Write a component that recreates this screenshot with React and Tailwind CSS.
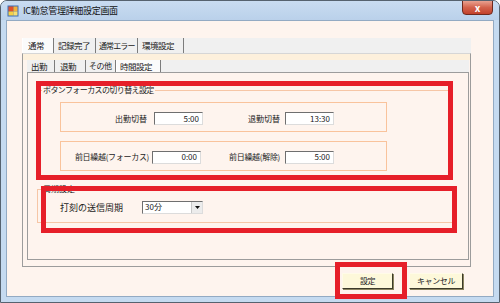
const font = "font-['Noto_Sans_CJK_JP','Noto_Sans',sans-serif]";

function Tab({ label, width, pl, selected, size = 'text-[8.5px] tracking-[-0.5px]' }) {
  return (
    <div
      className={`h-full flex items-center whitespace-nowrap overflow-hidden border-r border-[#7c7c7c] leading-none text-[#1a1a1a] ${size} ${width} ${pl} ${
        selected ? 'bg-[#fbfbfb] border-l border-l-white' : ''
      }`}
    >
      {label}
    </div>
  );
}

function Field({ value, w = 'w-[49px]' }) {
  return (
    <div
      className={`${w} h-[13px] bg-white border border-t-[#6f6f6f] border-l-[#6f6f6f] border-r-[#dcdcdc] border-b-[#dcdcdc] flex items-center justify-end pr-[3px] text-[8px] leading-none text-[#222]`}
    >
      {value}
    </div>
  );
}

function Button({ label, w }) {
  return (
    <div
      className={`${w} h-[16px] bg-[#fdf8da] border border-t-[#fffbe8] border-l-[#fffbe8] border-r-[#3c3a2a] border-b-[#3c3a2a] shadow-[1px_1px_0_#8a8460] flex items-center justify-center whitespace-nowrap text-[8px] tracking-[-0.4px] leading-none text-[#222]`}
    >
      {label}
    </div>
  );
}

export default function App() {
  return (
    <div
      className={`relative w-[500px] h-[303px] overflow-hidden bg-[#c5daf0] border border-[#56626f] rounded-t-[7px] flex flex-col ${font}`}
    >
      {/* title bar */}
      <div className="h-[19px] flex items-start bg-gradient-to-b from-[#c9dcf1] to-[#bad1ea]">
        <svg className="mt-[4px] ml-[6px]" width="12" height="12" viewBox="0 0 12 12">
          <rect x="0.5" y="0.5" width="11" height="11" fill="#3d6fb8" />
          <rect x="1.5" y="1.5" width="5" height="5" fill="#e0502a" />
          <rect x="6.5" y="1.5" width="4" height="5" fill="#f3b03a" />
          <rect x="1.5" y="6.5" width="5" height="4" fill="#f6d045" />
          <rect x="6.5" y="6.5" width="4" height="4" fill="#f8e070" />
        </svg>
        <div className="ml-[4px] mt-[5px] text-[9px] tracking-[-0.3px] leading-none text-[#111]">IC勤怠管理詳細設定画面</div>
        <div className="ml-auto mr-[6px] w-[31px] h-[15px] -mt-px rounded-b-[4px] border border-[#6e2a1e] bg-gradient-to-b from-[#e8a190] via-[#d3624c] to-[#c2412a] flex items-center justify-center">
          <span className="text-[10px] leading-none font-bold text-white">x</span>
        </div>
      </div>

      {/* client area */}
      <div className="ml-[5px] w-[488px] h-[277px] bg-[#fef4ee] border border-[#93aac3] flex flex-col">
        {/* outer tab control */}
        <div className="ml-[15px] mt-[17px] w-[449px] h-[229px] flex flex-col">
          <div className="h-[15px] bg-[#f0f0f0] flex">
            <Tab label="通常" width="w-[32px]" pl="pl-[5px]" selected />
            <Tab label="記録完了" width="w-[42px]" pl="pl-[4px]" />
            <Tab label="通常エラー" width="w-[42px]" pl="pl-[3px]" size="text-[8px] tracking-[-0.9px]" />
            <Tab label="環境設定" width="w-[46px]" pl="pl-[4px]" />
          </div>
          <div className="flex-1 flex flex-col border border-[#9c9c9c] border-t-[#d6d6d6]">
            <div className="h-[6px] bg-[#fdf0dc]" />
            <div className="flex-1 flex flex-col pl-[4px] pr-px pb-[6px]">
              <div className="h-[12px] bg-[#f0f0f0] flex">
                <Tab label="出勤" width="w-[28px]" pl="pl-[4px]" />
                <Tab label="退勤" width="w-[31px]" pl="pl-[5px]" />
                <Tab label="その他" width="w-[30px]" pl="pl-[3px]" size="text-[8px] tracking-[-0.5px]" />
                <Tab label="時間設定" width="w-[45px]" pl="pl-[3px]" selected />
              </div>
              <div className="flex-1 border border-[#9c9c9c] bg-[#fef4ee] flex flex-col">
                {/* group 1 */}
                <div className="relative ml-[9px] mt-[17px] w-[415px] border border-[#f6c6a6] pt-[11px] pb-[5px] pl-[22px]">
                  <span className="absolute -top-[6px] left-[4px] bg-[#fef4ee] px-px text-[8px] tracking-[-0.6px] leading-[10px] text-[#222]">
                    ボタンフォーカスの切り替え設定
                  </span>
                  <div className="w-[327px] h-[30px] border border-[#f9c39c] flex items-center pt-[3px]">
                    <div className="w-[86px] text-right text-[8px] leading-none text-[#222]">出勤切替</div>
                    <div className="ml-[7px]"><Field value="5:00" /></div>
                    <div className="w-[77px] text-right text-[8px] leading-none text-[#222]">退勤切替</div>
                    <div className="ml-[5px]"><Field value="13:30" /></div>
                  </div>
                  <div className="mt-[9px] w-[327px] h-[30px] border border-[#f9c39c] flex items-center pt-[2px]">
                    <div className="w-[88px] text-right text-[8px] tracking-[-0.3px] leading-none text-[#222]">前日繰越(フォーカス)</div>
                    <div className="ml-[3px]"><Field value="0:00" /></div>
                    <div className="w-[79px] text-right text-[8px] tracking-[-0.3px] leading-none text-[#222]">前日繰越(解除)</div>
                    <div className="ml-[5px]"><Field value="5:00" /></div>
                  </div>
                </div>

                {/* group 2 */}
                <div className="relative ml-[9px] mt-[12px] w-[416px] h-[34px] border border-[#f6c6a6] flex items-center pl-[22px] pt-[2px]">
                  <span className="absolute -top-[6px] left-[4px] bg-[#fef4ee] px-px text-[8px] leading-[10px] text-[#222]">
                    周期設定
                  </span>
                  <div className="w-[82px] text-[9px] leading-none text-[#222]">打刻の送信周期</div>
                  <div className="w-[61px] h-[13px] bg-white border border-t-[#6f6f6f] border-l-[#6f6f6f] border-r-[#dcdcdc] border-b-[#dcdcdc] flex items-center">
                    <span className="flex-1 pl-[2px] text-[8px] leading-none text-[#222]">30分</span>
                    <div className="w-[11px] h-full bg-[#ececec] border-l border-[#c8c8c8] flex items-center justify-center">
                      <svg width="5" height="3" viewBox="0 0 5 3">
                        <path d="M0 0 H5 L2.5 3 Z" fill="#111" />
                      </svg>
                    </div>
                  </div>
                </div>
              </div>
            </div>
          </div>
        </div>

        {/* buttons */}
        <div className="mt-[6px] flex justify-end gap-[16px] pr-[30px]">
          <Button label="設定" w="w-[51px]" />
          <Button label="キャンセル" w="w-[54px]" />
        </div>
      </div>

      {/* red annotation frames */}
      <div className="absolute left-[35px] top-[80px] w-[417px] h-[99px] border-[5px] border-[#e61f29]" />
      <div className="absolute left-[40px] top-[185px] w-[416px] h-[47px] border-[5px] border-[#e61f29]" />
      <div className="absolute left-[334px] top-[261px] w-[72px] h-[37px] border-[5px] border-[#e61f29]" />
    </div>
  );
}
